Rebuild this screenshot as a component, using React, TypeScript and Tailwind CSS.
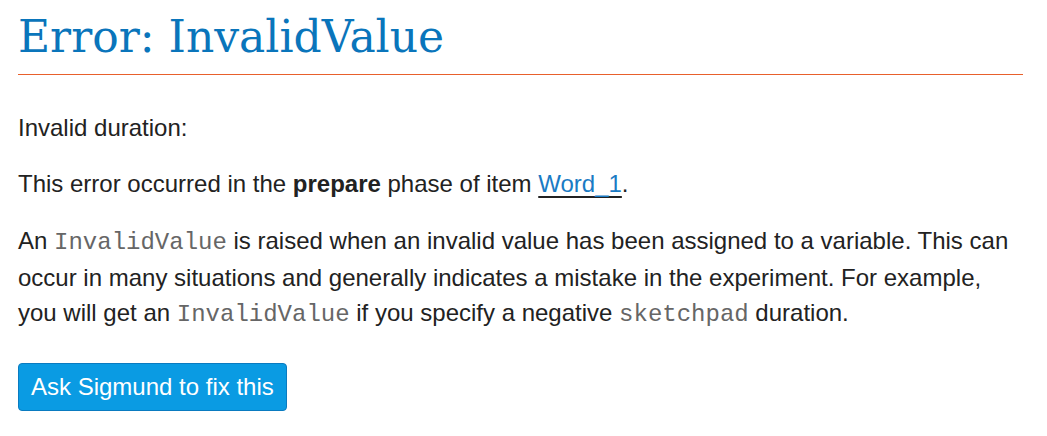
export default function App() {
  return (
    <div className="min-h-screen bg-white px-[18px] pr-[24px] font-['Liberation_Sans',Arial,sans-serif] text-[24px] text-[#222]">
      {/* Header */}
      <h1 className="pt-[8px] pb-[8px] border-b border-[#e8602c] font-['DejaVu_Serif',serif] text-[44px] leading-[58px] font-normal text-[#0a75bb]">
        Error: InvalidValue
      </h1>

      <p className="mt-[38px] leading-[30px]">Invalid duration:</p>

      <p className="mt-[26px] leading-[30px]">
        This error occurred in the <b>prepare</b> phase of item{' '}
        <a href="#" className="text-[#1a7bc4] underline decoration-[#222] underline-offset-[4px]">
          Word_1
        </a>
        .
      </p>

      <p className="mt-[24px] leading-[35px]">
        An <code className="font-['Liberation_Mono',monospace] text-[24px] text-[#666]">InvalidValue</code> is raised when
        an invalid value has been assigned to a variable. This can occur in many situations and generally indicates a
        mistake in the experiment. For example, you will get an{' '}
        <code className="font-['Liberation_Mono',monospace] text-[24px] text-[#666]">InvalidValue</code> if you specify a
        negative <code className="font-['Liberation_Mono',monospace] text-[24px] text-[#666]">sketchpad</code> duration.
      </p>

      <button className="mt-[31px] h-[48px] px-[12px] rounded-[4px] border border-[#0a7bc0] bg-[#0a9be3] text-[24px] text-white">
        Ask Sigmund to fix this
      </button>
    </div>
  );
}
